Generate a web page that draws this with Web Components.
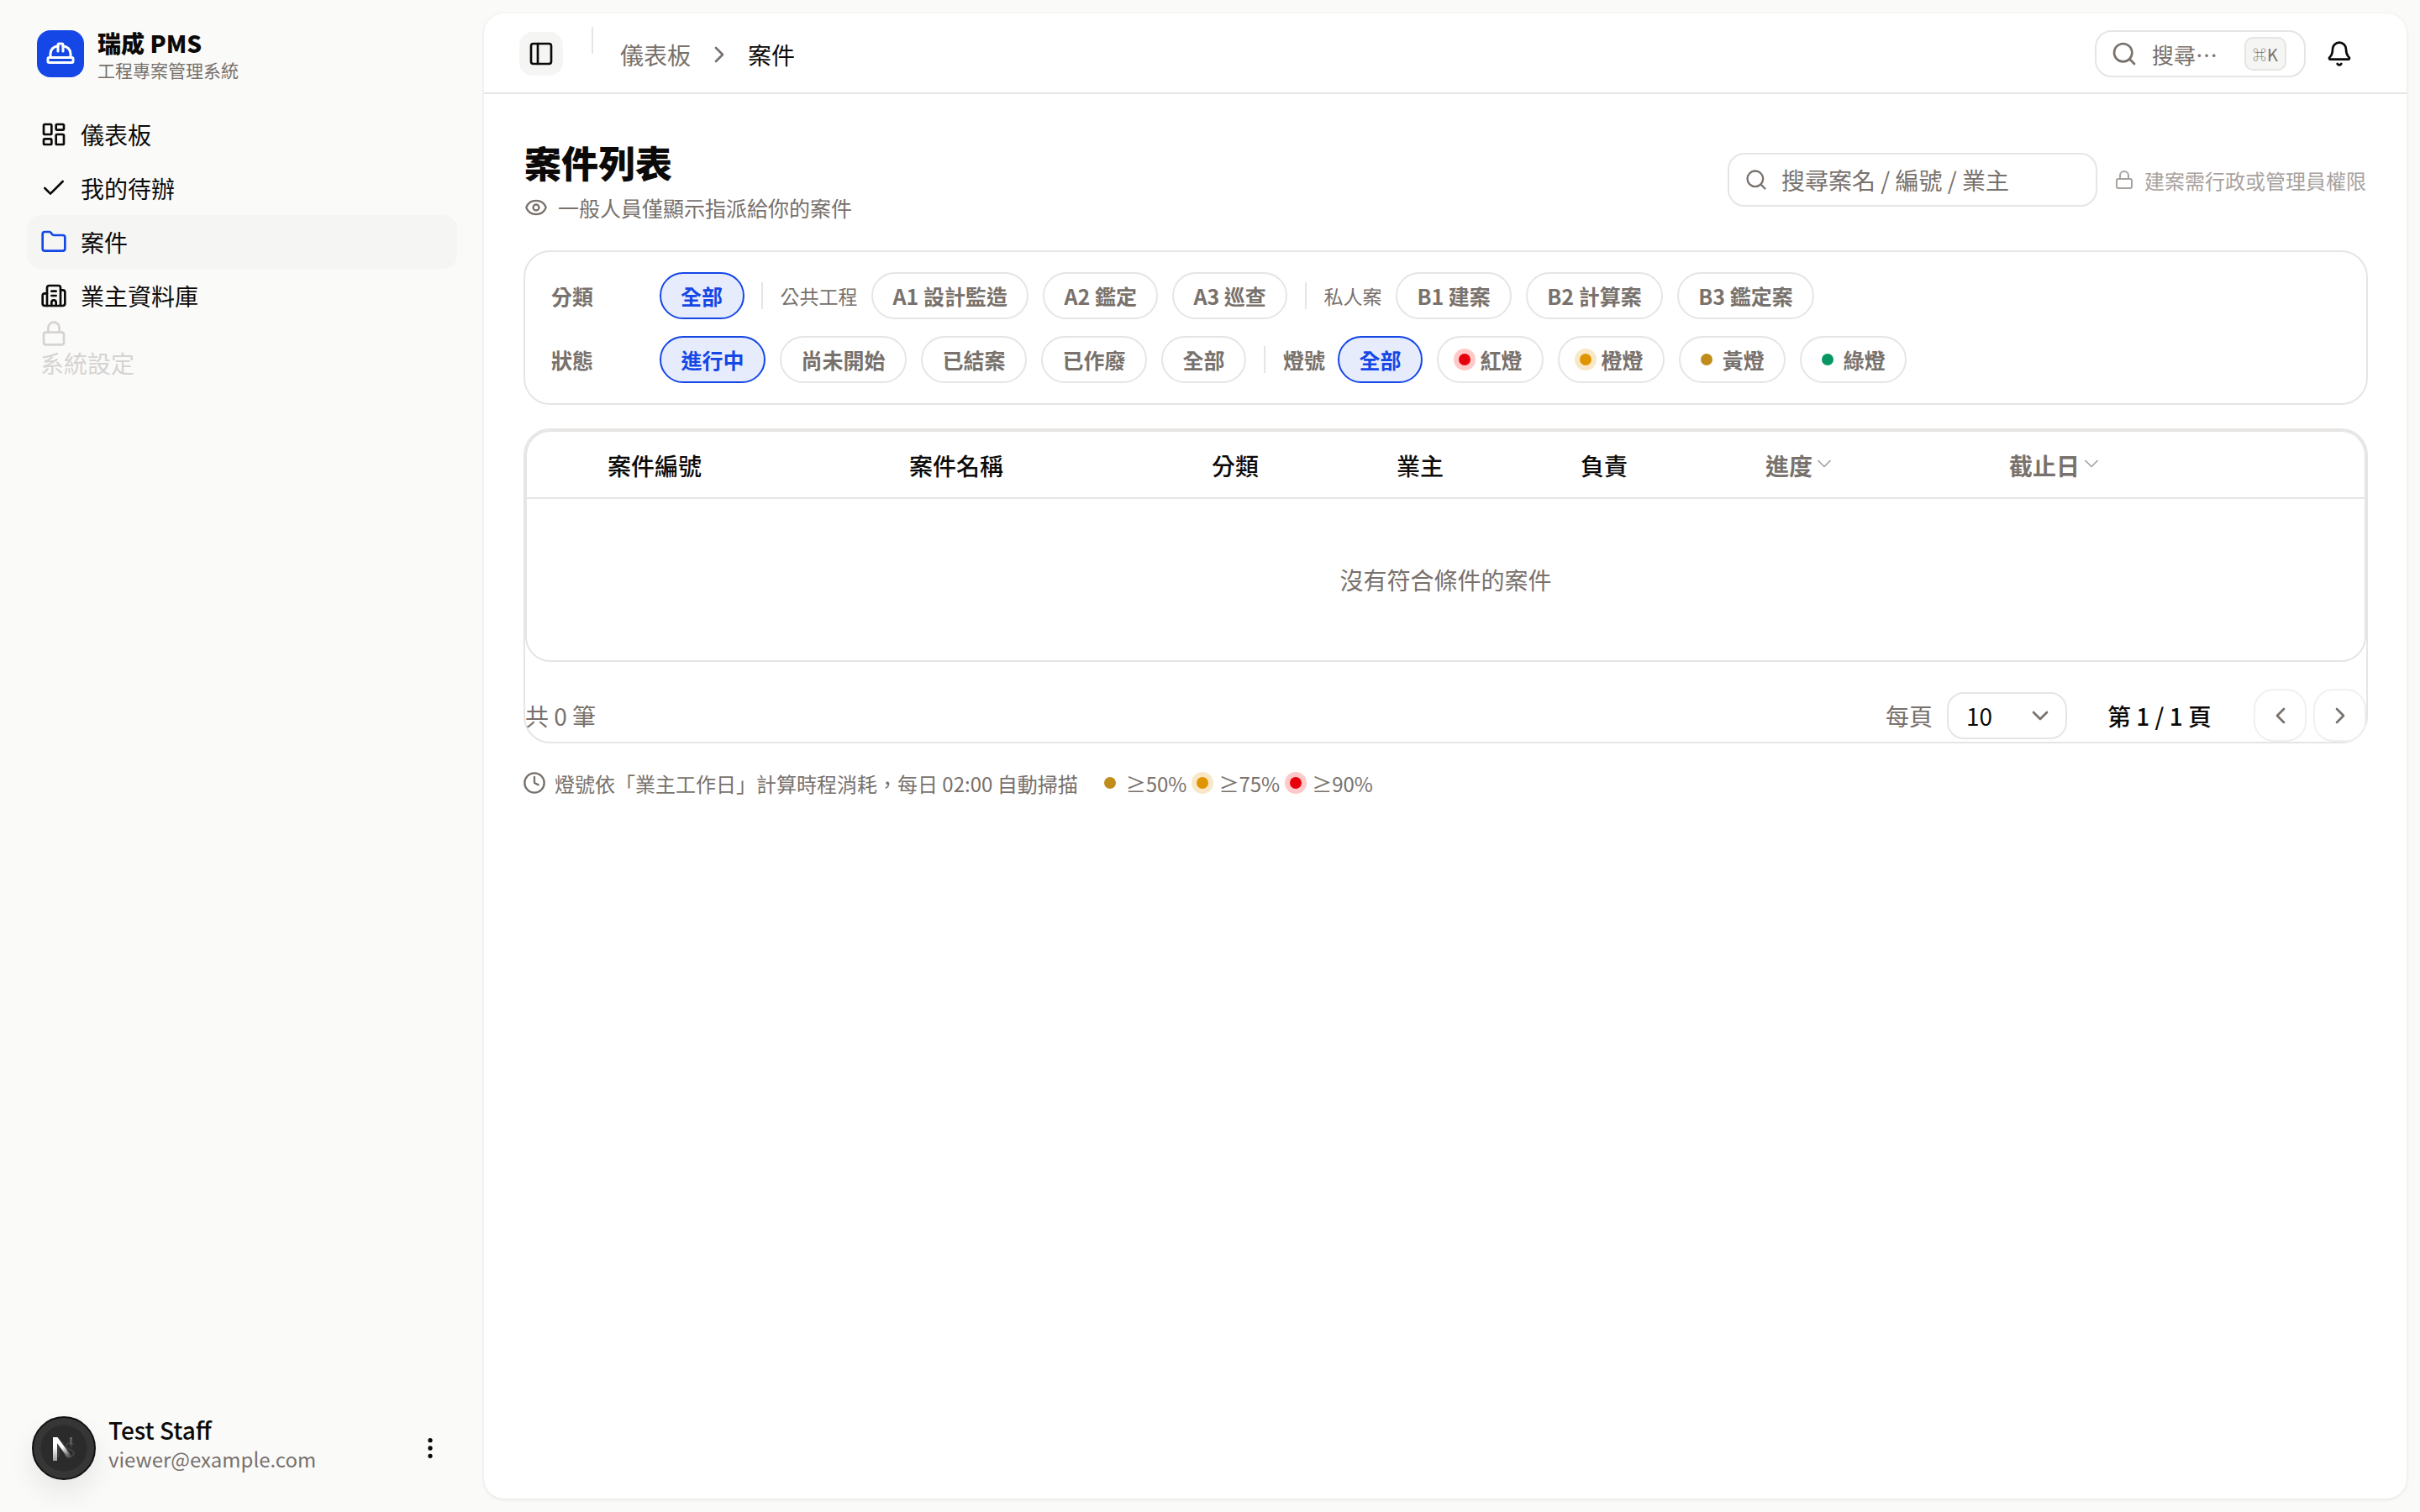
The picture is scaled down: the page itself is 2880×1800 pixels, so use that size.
<!DOCTYPE html>
<html lang="zh-Hant">
<head>
<meta charset="utf-8">
<title>案件列表</title>
<style>
  html, body { margin: 0; height: 100%; }
  body {
    background: #fafaf9;
    color: #0c0a09;
    font-family: "Noto Sans CJK TC", "Noto Sans", sans-serif;
  }
</style>
</head>
<body>
<pms-app></pms-app>

<script>
const ICONS = {
  dashboard: '<rect x="3" y="3" width="7" height="9" rx="1"/><rect x="14" y="3" width="7" height="5" rx="1"/><rect x="14" y="12" width="7" height="9" rx="1"/><rect x="3" y="16" width="7" height="5" rx="1"/>',
  check: '<path d="M20 6 9 17l-5-5"/>',
  folder: '<path d="M20 20a2 2 0 0 0 2-2V8a2 2 0 0 0-2-2h-7.9a2 2 0 0 1-1.69-.9L9.6 3.9A2 2 0 0 0 7.93 3H4a2 2 0 0 0-2 2v13a2 2 0 0 0 2 2Z"/>',
  building: '<path d="M10 12h4"/><path d="M10 8h4"/><path d="M14 21v-3a2 2 0 0 0-4 0v3"/><path d="M6 10H4a2 2 0 0 0-2 2v7a2 2 0 0 0 2 2h16a2 2 0 0 0 2-2V9a2 2 0 0 0-2-2h-2"/><path d="M6 21V5a2 2 0 0 1 2-2h8a2 2 0 0 1 2 2v16"/>',
  lock: '<rect x="3" y="11" width="18" height="11" rx="2" ry="2"/><path d="M7 11V7a5 5 0 0 1 10 0v4"/>',
  hardhat: '<path d="M10 10V5a1 1 0 0 1 1-1h2a1 1 0 0 1 1 1v5"/><path d="M14 6a6 6 0 0 1 6 6v3"/><path d="M4 15v-3a6 6 0 0 1 6-6"/><rect x="2" y="15" width="20" height="4" rx="1"/>',
  kebab: '<circle cx="12" cy="12" r="1"/><circle cx="12" cy="5" r="1"/><circle cx="12" cy="19" r="1"/>',
  panel: '<rect x="3" y="3" width="18" height="18" rx="2"/><path d="M9 3v18"/>',
  search: '<circle cx="11" cy="11" r="8"/><path d="m21 21-4.3-4.3"/>',
  bell: '<path d="M10.268 21a2 2 0 0 0 3.464 0"/><path d="M3.262 15.326A1 1 0 0 0 4 17h16a1 1 0 0 0 .74-1.673C19.41 13.956 18 12.499 18 8A6 6 0 0 0 6 8c0 4.499-1.411 5.956-2.738 7.326"/>',
  eye: '<path d="M2.06 12.35a1 1 0 0 1 0-.7 10.75 10.75 0 0 1 19.88 0 1 1 0 0 1 0 .7 10.75 10.75 0 0 1-19.88 0"/><circle cx="12" cy="12" r="3"/>',
  clock: '<circle cx="12" cy="12" r="10"/><path d="M12 6v6l4 2"/>',
  right: '<path d="m9 18 6-6-6-6"/>',
  left: '<path d="m15 18-6-6 6-6"/>',
  down: '<path d="m6 9 6 6 6-6"/>'
}

customElements.define('x-icon', class extends HTMLElement {
  connectedCallback() {
    const size = this.getAttribute('size') || 32
    const stroke = this.getAttribute('stroke') || 2
    this.attachShadow({ mode: 'open' }).innerHTML = `
      <style>
        :host { display: inline-flex; flex: none; width: ${size}px; height: ${size}px; }
        svg { width: 100%; height: 100%; display: block; }
      </style>
      <svg viewBox="0 0 24 24" fill="none" stroke="currentColor" stroke-width="${stroke}"
        stroke-linecap="round" stroke-linejoin="round">${ICONS[this.getAttribute('name')]}</svg>`
  }
})

customElements.define('nav-item', class extends HTMLElement {
  connectedCallback() {
    this.attachShadow({ mode: 'open' }).innerHTML = `
      <style>
        :host {
          display: flex; align-items: center; gap: 16px;
          height: 64px; padding: 0 16px; border-radius: 16px;
          font-size: 28px; line-height: 42px; color: #0c0a09;
        }
        :host([active]) { background: #f5f5f4; }
        :host([active]) x-icon { color: #1447e6; }
        :host([locked]) {
          display: block; height: auto; color: #d6d3d1;
        }
        :host([locked]) x-icon { display: flex; margin-top: -3px; }
        :host([locked]) span { display: block; margin-top: -2px; }
      </style>
      <x-icon name="${this.getAttribute('icon')}"></x-icon>
      <span><slot></slot></span>`
  }
})

customElements.define('pms-sidebar', class extends HTMLElement {
  constructor() {
    super()
    this.attachShadow({ mode: 'open' }).innerHTML = `
      <style>
        :host { display: flex; flex-direction: column; width: 576px; flex: none; height: 1800px; box-sizing: border-box; }
        .brand { display: flex; gap: 16px; padding: 36px 0 0 44px; height: 92px; box-sizing: border-box; }
        .logo {
          width: 56px; height: 56px; border-radius: 16px; background: #1447e6; color: #fff;
          display: flex; align-items: center; justify-content: center;
        }
        .name { font-size: 28px; line-height: 30px; font-weight: 900; }
        .sub { font-size: 21px; line-height: 34px; color: #78716c; }
        nav { display: flex; flex-direction: column; margin: 36px 32px 0; }
        .user { margin-top: auto; display: flex; align-items: center; padding: 0 48px 38px 38px; }
        .avatar {
          position: relative; width: 76px; height: 76px; border-radius: 50%; box-sizing: border-box;
          background: radial-gradient(circle, #2b2b2b 0 27px, #363636 28px); border: 2px solid #111; flex: none;
          box-shadow: 0 16px 32px rgba(0,0,0,.08);
          display: flex; align-items: center; justify-content: center;
          color: #3f3f3f; font-size: 24px;
        }
        .avatar svg { position: absolute; left: 23px; top: 23px; width: 26px; height: 28px; }
        .who { margin: -10px 0 0 15px; flex: 1; }
        .who b { display: block; font-weight: 500; font-size: 28px; line-height: 36px; }
        .who span { display: block; font-size: 24px; line-height: 34px; color: #78716c; }
      </style>
      <div class="brand">
        <div class="logo"><x-icon name="hardhat" size="36"></x-icon></div>
        <div>
          <div class="name">瑞成 PMS</div>
          <div class="sub">工程專案管理系統</div>
        </div>
      </div>
      <nav>
        <nav-item icon="dashboard">儀表板</nav-item>
        <nav-item icon="check">我的待辦</nav-item>
        <nav-item icon="folder" active>案件</nav-item>
        <nav-item icon="building">業主資料庫</nav-item>
        <nav-item icon="lock" locked>系統設定</nav-item>
      </nav>
      <div class="user">
        <div class="avatar">TS
          <svg viewBox="0 0 26 28">
            <defs>
              <linearGradient id="l" x1="0" y1="0" x2="0" y2="1">
                <stop offset="0.4" stop-color="#fff"/><stop offset="1" stop-color="#fff" stop-opacity=".55"/>
              </linearGradient>
              <linearGradient id="d" x1="0" y1="0" x2="0.6" y2="1">
                <stop offset="0.5" stop-color="#fff"/><stop offset="1" stop-color="#fff" stop-opacity="0"/>
              </linearGradient>
              <linearGradient id="r" x1="0" y1="0" x2="0" y2="1">
                <stop offset="0" stop-color="#fff" stop-opacity=".3"/><stop offset="1" stop-color="#fff" stop-opacity="0"/>
              </linearGradient>
            </defs>
            <rect x="0" y="0" width="5" height="28" fill="url(#l)"/>
            <polygon points="0,0 5.5,0 26,28 20,28" fill="url(#d)"/>
            <rect x="20" y="0" width="3" height="14" fill="url(#r)"/>
          </svg>
        </div>
        <div class="who"><b>Test Staff</b><span>viewer@example.com</span></div>
        <x-icon name="kebab"></x-icon>
      </div>`
  }
})

customElements.define('pms-topbar', class extends HTMLElement {
  constructor() {
    super()
    this.attachShadow({ mode: 'open' }).innerHTML = `
      <style>
        :host {
          display: flex; align-items: center; height: 96px; box-sizing: border-box;
          padding: 2px 64px 0 42px; border-bottom: 2px solid #e7e5e4; flex: none;
        }
        .toggle {
          width: 52px; height: 52px; border-radius: 16px; background: #f5f5f4;
          display: flex; align-items: center; justify-content: center;
        }
        .sep { width: 2px; height: 32px; background: #e7e5e4; align-self: flex-start; margin: 14px 32px 0 34px; }
        .crumbs { display: flex; align-items: center; gap: 18px; font-size: 28px; color: #78716c; margin-top: 1px; }
        .crumbs b { font-weight: 400; color: #0c0a09; }
        .search {
          margin-left: auto; display: flex; align-items: center; width: 251px; height: 56px;
          box-sizing: border-box; border: 2px solid #e7e5e4; border-radius: 20px;
          padding: 0 21px 0 17px; color: #78716c; font-size: 26px;
        }
        .search span { margin-left: 17px; }
        kbd {
          margin-left: auto; width: 50px; height: 40px; box-sizing: border-box;
          background: #f5f5f4; border: 2px solid #e7e5e4; border-radius: 10px;
          display: flex; align-items: center; justify-content: center;
          font: 20px "Noto Sans CJK TC", "DejaVu Sans", sans-serif; color: #78716c;
        }
        kbd small { font-size: 16px; margin-right: 1px; }
        .bell { margin: 0 0 0 24px; display: flex; }
      </style>
      <div class="toggle"><x-icon name="panel"></x-icon></div>
      <div class="sep"></div>
      <div class="crumbs">
        <span>儀表板</span><x-icon name="right" size="32"></x-icon><b>案件</b>
      </div>
      <div class="search"><x-icon name="search"></x-icon><span>搜尋…</span><kbd><small>⌘</small>K</kbd></div>
      <div class="bell"><x-icon name="bell"></x-icon></div>`
  }
})

customElements.define('page-head', class extends HTMLElement {
  constructor() {
    super()
    this.attachShadow({ mode: 'open' }).innerHTML = `
      <style>
        :host { display: flex; align-items: center; justify-content: space-between; height: 108px; padding-right: 2px; }
        h1 { margin: 0; font-size: 44px; line-height: 68px; font-weight: 900; }
        .sub { display: flex; align-items: center; gap: 12px; font-size: 25px; line-height: 40px; color: #78716c; }
        .left { margin: -2px 0 0 1px; }
        .right { display: flex; align-items: center; gap: 20px; }
        .input {
          display: flex; align-items: center; gap: 16px; width: 440px; height: 64px; box-sizing: border-box;
          border: 2px solid #e7e5e4; border-radius: 20px; padding: 0 18px; font-size: 28px; color: #78716c;
        }
        .note { display: flex; align-items: center; gap: 12px; font-size: 24px; color: #a8a29e; }
      </style>
      <div class="left">
        <h1>案件列表</h1>
        <div class="sub"><x-icon name="eye" size="28"></x-icon>一般人員僅顯示指派給你的案件</div>
      </div>
      <div class="right">
        <div class="input"><x-icon name="search" size="28"></x-icon>搜尋案名 / 編號 / 業主</div>
        <div class="note"><x-icon name="lock" size="24"></x-icon>建案需行政或管理員權限</div>
      </div>`
  }
})

customElements.define('lamp-dot', class extends HTMLElement {
  constructor() {
    super()
    this.attachShadow({ mode: 'open' }).innerHTML = `
      <style>
        :host { display: inline-block; width: 14px; height: 14px; border-radius: 50%; flex: none; background: #c08d1c; }
        :host([level=red]) { background: #e7000b; box-shadow: 0 0 0 6px #ffc9c9; }
        :host([level=orange]) { background: #e09500; box-shadow: 0 0 0 6px #f8e8c8; }
        :host([level=green]) { background: #079762; }
      </style>`
  }
})

customElements.define('filter-pill', class extends HTMLElement {
  constructor() {
    super()
    this.attachShadow({ mode: 'open' }).innerHTML = `
      <style>
        :host {
          display: inline-flex; align-items: center; gap: 12px; height: 56px; box-sizing: border-box;
          padding: 0 23.5px; border: 2px solid #e7e5e4; border-radius: 28px; background: #fff;
          font-size: 25px; font-weight: 700; color: #78716c; white-space: nowrap; flex: none;
        }
        :host([active]) { background: #e7ecfc; border-color: #1447e6; color: #1447e6; }
      </style>
      <slot></slot>`
  }
})

customElements.define('filter-bar', class extends HTMLElement {
  constructor() {
    super()
    this.attachShadow({ mode: 'open' }).innerHTML = `
      <style>
        :host {
          display: flex; flex-direction: column; gap: 20px; margin-top: 30px; box-sizing: border-box;
          border: 2px solid #e7e5e4; border-radius: 32px; padding: 24px 32px 24px 31px; background: #fff;
        }
        .row { display: flex; align-items: center; gap: 16.5px; }
        .row.status { gap: 17px; }
        .label { width: 112px; font-size: 25px; font-weight: 700; color: #78716c; white-space: nowrap; flex: none; }
        .label.short { width: 48px; }
        .group { font-size: 23px; color: #78716c; white-space: nowrap; }
        i { width: 2px; height: 32px; background: #e7e5e4; margin: 0 4px; flex: none; }
      </style>
      <div class="row">
        <span class="label">分類</span>
        <filter-pill active>全部</filter-pill>
        <i></i>
        <span class="group">公共工程</span>
        <filter-pill>A1 設計監造</filter-pill>
        <filter-pill>A2 鑑定</filter-pill>
        <filter-pill>A3 巡查</filter-pill>
        <i></i>
        <span class="group">私人案</span>
        <filter-pill>B1 建案</filter-pill>
        <filter-pill>B2 計算案</filter-pill>
        <filter-pill>B3 鑑定案</filter-pill>
      </div>
      <div class="row status">
        <span class="label">狀態</span>
        <filter-pill active>進行中</filter-pill>
        <filter-pill>尚未開始</filter-pill>
        <filter-pill>已結案</filter-pill>
        <filter-pill>已作廢</filter-pill>
        <filter-pill>全部</filter-pill>
        <i></i>
        <span class="label short">燈號</span>
        <filter-pill active>全部</filter-pill>
        <filter-pill><lamp-dot level="red"></lamp-dot>紅燈</filter-pill>
        <filter-pill><lamp-dot level="orange"></lamp-dot>橙燈</filter-pill>
        <filter-pill><lamp-dot></lamp-dot>黃燈</filter-pill>
        <filter-pill><lamp-dot level="green"></lamp-dot>綠燈</filter-pill>
      </div>`
  }
})

customElements.define('case-table', class extends HTMLElement {
  constructor() {
    super()
    this.attachShadow({ mode: 'open' }).innerHTML = `
      <style>
        :host {
          display: block; margin-top: 28px; box-sizing: border-box;
          border: 2px solid #e7e5e4; border-radius: 32px; background: #fff;
        }
        .table { border: 2px solid #e7e5e4; border-radius: 30px; }
        .head {
          display: grid; grid-template-columns: 359px 360px 220px 219px 220px 290px 1fr;
          align-items: center; padding: 2px 0 0 96px; box-sizing: border-box;
          border-bottom: 2px solid #e7e5e4; height: 80px; font-size: 28px; font-weight: 500;
        }
        .sort { color: #78716c; font-weight: 700; display: flex; align-items: center; gap: 0; }
        .sort x-icon { color: #a8a29e; margin-top: -4px; }
        .empty { height: 192px; display: flex; align-items: center; justify-content: center; font-size: 28px; color: #78716c; }
        .pager { display: flex; align-items: center; margin-top: 32px; height: 63px; font-size: 28px; }
        .total { color: #78716c; margin-right: auto; }
        .per { color: #78716c; margin-right: 17px; }
        .select {
          width: 143px; height: 56px; box-sizing: border-box; border: 2px solid #e7e5e4; border-radius: 20px;
          display: flex; align-items: center; justify-content: space-between; padding: 0 14px 0 21px;
        }
        .select x-icon { color: #78716c; }
        .page { margin: 0 50px 0 48px; font-weight: 500; }
        .btn {
          width: 63px; height: 63px; box-sizing: border-box; border: 2px solid #f1f0ef; border-radius: 24px;
          display: flex; align-items: center; justify-content: center; color: #78716c;
        }
        .btn + .btn { margin-left: 8px; }
      </style>
      <div class="table">
        <div class="head">
          <span>案件編號</span><span>案件名稱</span><span>分類</span><span>業主</span><span>負責</span>
          <span class="sort">進度<x-icon name="down" size="28" stroke="1.5"></x-icon></span>
          <span class="sort">截止日<x-icon name="down" size="28" stroke="1.5"></x-icon></span>
        </div>
        <div class="empty">沒有符合條件的案件</div>
      </div>
      <div class="pager">
        <span class="total">共 0 筆</span>
        <span class="per">每頁</span>
        <div class="select"><span>10</span><x-icon name="down"></x-icon></div>
        <span class="page">第 1 / 1 頁</span>
        <div class="btn"><x-icon name="left"></x-icon></div>
        <div class="btn"><x-icon name="right"></x-icon></div>
      </div>`
  }
})

customElements.define('lamp-legend', class extends HTMLElement {
  constructor() {
    super()
    this.attachShadow({ mode: 'open' }).innerHTML = `
      <style>
        :host {
          display: flex; align-items: center; margin-top: 33px; height: 28px;
          font-size: 24px; color: #78716c; white-space: nowrap;
        }
        x-icon { margin: 0 10px 0 -1px; }
        .items { display: flex; align-items: center; gap: 12px; margin-left: 31px; }
      </style>
      <x-icon name="clock" size="28"></x-icon>
      燈號依「業主工作日」計算時程消耗，每日 02:00 自動掃描
      <div class="items">
        <lamp-dot></lamp-dot><span>≥50%</span>
        <lamp-dot level="orange"></lamp-dot><span>≥75%</span>
        <lamp-dot level="red"></lamp-dot><span>≥90%</span>
      </div>`
  }
})

customElements.define('pms-app', class extends HTMLElement {
  constructor() {
    super()
    this.attachShadow({ mode: 'open' }).innerHTML = `
      <style>
        :host { display: flex; height: 1800px; }
        main {
          flex: 1; margin: 16px 16px 16px 0; background: #fff; border-radius: 24px;
          box-shadow: 0 1px 4px rgba(0,0,0,.1); display: flex; flex-direction: column; min-width: 0;
        }
        .content { padding: 48px 46px 0 47px; flex: 1; }
      </style>
      <pms-sidebar></pms-sidebar>
      <main>
        <pms-topbar></pms-topbar>
        <div class="content">
          <page-head></page-head>
          <filter-bar></filter-bar>
          <case-table></case-table>
          <lamp-legend></lamp-legend>
        </div>
      </main>`
  }
})
</script>
</body>
</html>
